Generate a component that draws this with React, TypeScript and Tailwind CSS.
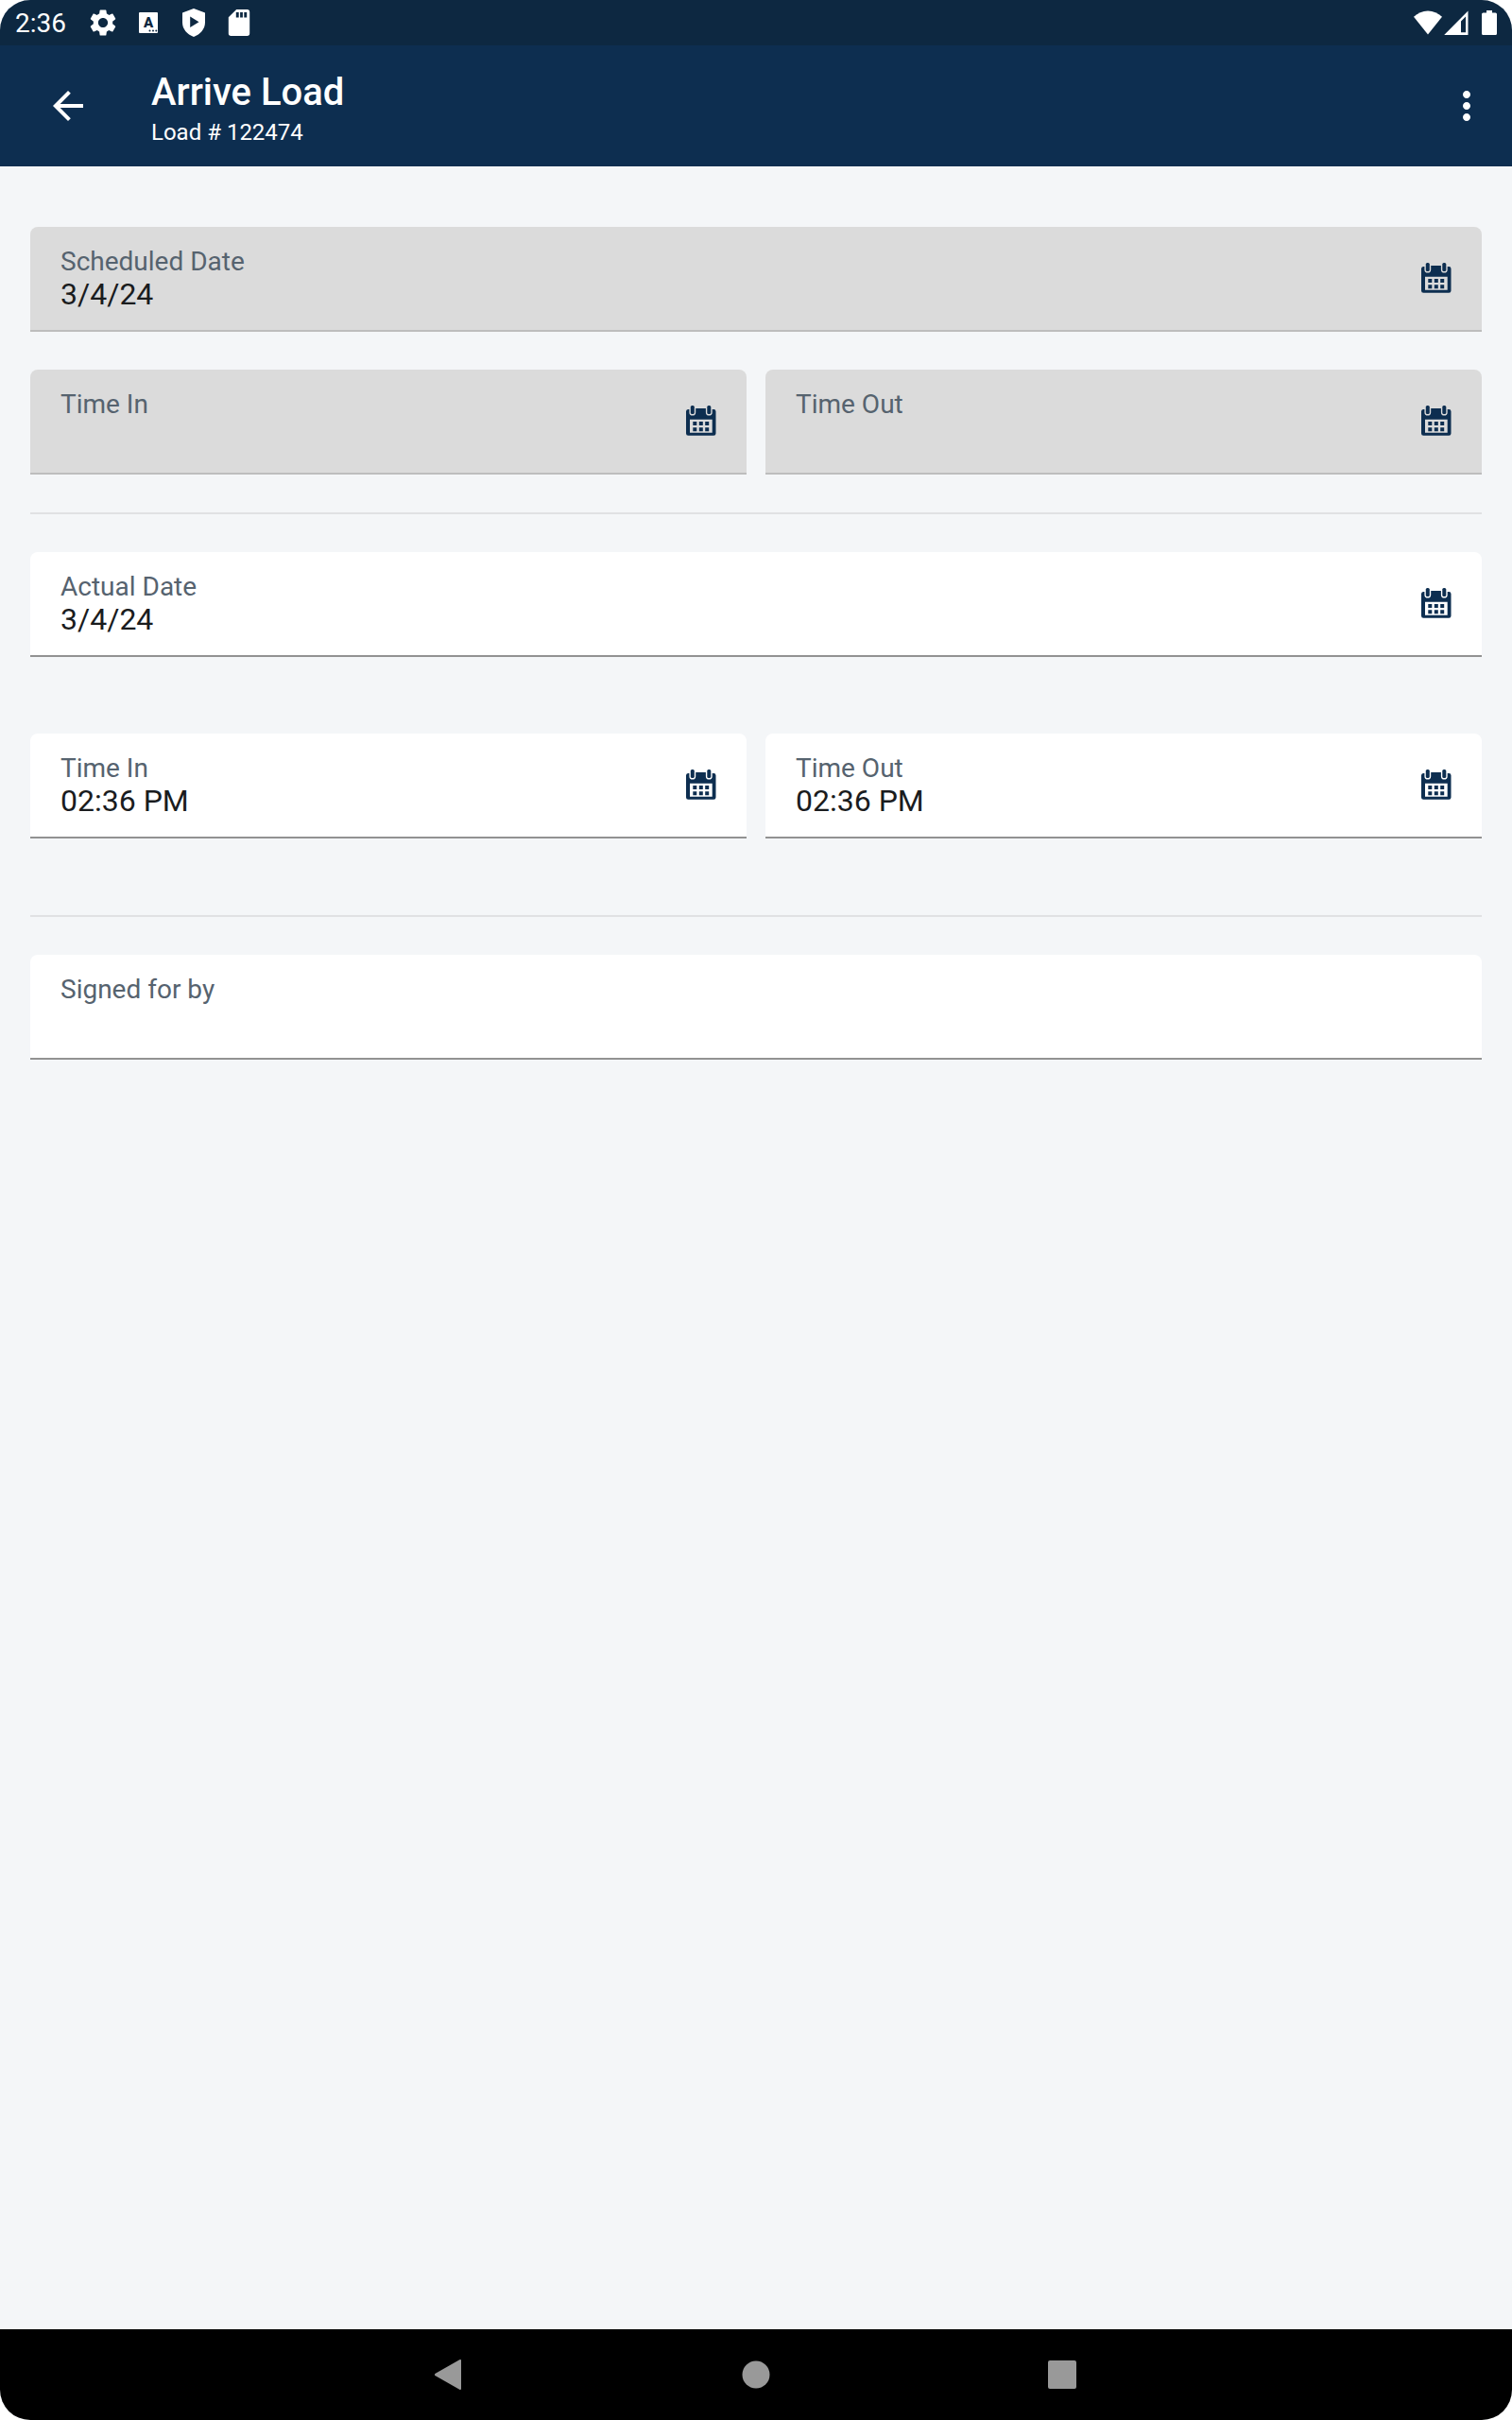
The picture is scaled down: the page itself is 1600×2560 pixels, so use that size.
import React, { useState } from "react";
import { MdArrowBack, MdMoreVert, MdSettings } from "react-icons/md";

const KeyboardIcon = () => (
  <svg viewBox="0 0 36 36" className="size-9" aria-hidden="true">
    <rect x="8" y="7" width="20" height="22" rx="1" fill="white" />
    <text
      x="18"
      y="23"
      textAnchor="middle"
      className="fill-[#0d2841] font-['Roboto'] text-[15px] font-black"
    >
      A
    </text>
    <circle cx="19.5" cy="26.5" r="1" fill="#0d2841" />
    <circle cx="23" cy="26.5" r="1" fill="#0d2841" />
    <circle cx="26.3" cy="26.5" r="1" fill="#0d2841" />
  </svg>
);

const ShieldIcon = () => (
  <svg viewBox="0 0 36 36" className="size-9" aria-hidden="true">
    <path
      fill="white"
      fillRule="evenodd"
      d="M18 3l12 4.600v10.200c0 6.800-4.800 12.600-12 15.200C10.800 30.400 6 24.600 6 17.800V7.600zM14.200 11.500v11.400l9.300-5.700z"
    />
  </svg>
);

const SdCardIcon = () => (
  <svg viewBox="0 0 36 36" className="size-9" aria-hidden="true">
    <path
      fill="white"
      fillRule="evenodd"
      d="M15.200 4H26.500a2.700 2.700 0 0 1 2.700 2.700V29.300a2.700 2.700 0 0 1-2.700 2.700H9.500a2.700 2.700 0 0 1-2.700-2.700V12.300zM14.800 7v5.600h2.900V7zM19.100 7v5.600h2.800V7zM23.300 7v5.600h2.900V7z"
    />
  </svg>
);

const WifiIcon = () => (
  <svg viewBox="0 0 30 26" className="h-[26px] w-[30px]" aria-hidden="true">
    <path fill="white" d="M15 25.500L0 6.800C4.300 3 9.400.5 15 .5S25.700 3 30 6.800z" />
  </svg>
);

const SignalIcon = () => (
  <svg viewBox="0 0 26 26" className="size-[26px]" aria-hidden="true">
    <path
      fill="white"
      fillRule="evenodd"
      d="M25.500.5v25.500H.2zM23 6.500L18 11.600V23.300h5z"
    />
  </svg>
);

const BatteryIcon = () => (
  <svg viewBox="0 0 16 26" className="h-[26px] w-4" aria-hidden="true">
    <path
      fill="white"
      d="M5 0h6v2.500h3.500A1.500 1.500 0 0 1 16 4v20.500a1.500 1.500 0 0 1-1.500 1.500h-13A1.500 1.500 0 0 1 0 24.500V4a1.500 1.500 0 0 1 1.500-1.500H5z"
    />
  </svg>
);

const CalendarIcon = () => (
  <svg viewBox="0 0 32 32" className="size-8" fill="currentColor" aria-hidden="true">
    <rect x="4.800" y="0" width="4" height="9" rx="1.600" />
    <rect x="22.300" y="0" width="4" height="9" rx="1.600" />
    <path
      fillRule="evenodd"
      d="M2 4h1.400v3.200a3.400 3.400 0 0 0 6.800 0V3h10.700v4.200a3.400 3.400 0 0 0 6.800 0V4h1.500A2.300 2.300 0 0 1 31.500 6.300V29.500a2.300 2.300 0 0 1-2.300 2.300H2.300A2.300 2.300 0 0 1 0 29.500V6.300A2.300 2.300 0 0 1 2 4zM4 14.700v14h23.700v-14z"
    />
    <path d="M7.300 17h4v4h-4zM13.800 17h4v4h-4zM20.200 17h4v4h-4zM7.300 23.200h4v4h-4zM13.800 23.200h4v4h-4zM20.200 23.200h4v4h-4z" />
  </svg>
);

interface FieldProps {
  id: string;
  label: string;
  initial?: string;
  disabled?: boolean;
  picker?: boolean;
}

const Field: React.FC<FieldProps> = ({
  id,
  label,
  initial = "",
  disabled = false,
  picker = true,
}) => {
  const [value, setValue] = useState(initial);

  return (
    <div
      className={`flex min-w-0 flex-1 items-center rounded-t-lg border-b-2 px-8 pt-[21px] pb-5 ${
        disabled ? "border-[#bdbdbd] bg-[#dbdbdb]" : "border-[#929292] bg-white"
      }`}
    >
      <div className="flex min-w-0 flex-1 flex-col">
        <label htmlFor={id} className="text-[28px] leading-8 text-[#56636f]">
          {label}
        </label>
        <input
          id={id}
          type="text"
          value={value}
          disabled={disabled}
          onChange={(e) => setValue(e.target.value)}
          className="h-9 w-full bg-transparent text-[32px] leading-9 text-[#1a1c1e] outline-none"
        />
      </div>
      {picker && (
        <button
          type="button"
          disabled={disabled}
          aria-label={`Pick ${label}`}
          className="pb-0.5 text-[#0d2e50]"
        >
          <CalendarIcon />
        </button>
      )}
    </div>
  );
};

const StatusBar = () => (
  <div className="flex h-12 items-center justify-between bg-[#0d2841] px-4 text-white">
    <div className="flex items-center">
      <span className="w-[75px] pt-0.5 text-[28px] leading-8">2:36</span>
      <div className="flex items-center gap-3">
        <MdSettings className="size-9 p-px" />
        <KeyboardIcon />
        <ShieldIcon />
        <SdCardIcon />
      </div>
    </div>
    <div className="flex items-center">
      <WifiIcon />
      <div className="ml-0.5 mr-3.5">
        <SignalIcon />
      </div>
      <BatteryIcon />
    </div>
  </div>
);

const Header = () => (
  <header className="flex h-32 items-center bg-[#0d2e50] pl-12 pr-6 text-white">
    <button type="button" aria-label="Back">
      <MdArrowBack className="size-12" />
    </button>
    <div className="ml-16 flex-1 pt-1">
      <h1 className="text-[40px] font-medium leading-[52px]">Arrive Load</h1>
      <p className="text-2xl leading-8">Load # 122474</p>
    </div>
    <button type="button" aria-label="More options">
      <MdMoreVert className="size-12" />
    </button>
  </header>
);

const NavBar = () => (
  <nav className="flex h-24 items-center justify-center gap-1 bg-black text-[#999999]">
    <button type="button" aria-label="Back" className="flex w-80 justify-center">
      <svg viewBox="0 0 32 32" className="size-8" fill="currentColor">
        <path d="M28 1v30a1 1 0 0 1-1.700.7L.8 17.300a1.600 1.600 0 0 1 0-2.600L26.300.3A1 1 0 0 1 28 1z" />
      </svg>
    </button>
    <button type="button" aria-label="Home" className="flex w-80 justify-center">
      <svg viewBox="0 0 32 32" className="size-8" fill="currentColor">
        <circle cx="16" cy="16" r="14.500" />
      </svg>
    </button>
    <button type="button" aria-label="Overview" className="flex w-80 justify-center">
      <svg viewBox="0 0 32 32" className="size-8" fill="currentColor">
        <rect x="1" y="1" width="30" height="30" rx="2" />
      </svg>
    </button>
  </nav>
);

const App: React.FC = () => {
  return (
    <div className="bg-white font-['Roboto',sans-serif]">
      <div className="flex min-h-screen flex-col overflow-hidden rounded-[32px] bg-[#f4f6f8]">
        <StatusBar />
        <Header />
        <main className="flex-1 px-8 pt-16">
          <form className="flex flex-col">
            {/* Scheduled */}
            <div className="flex flex-col gap-10">
              <Field id="scheduled-date" label="Scheduled Date" initial="3/4/24" disabled />
              <div className="flex gap-5">
                <Field id="scheduled-in" label="Time In" disabled />
                <Field id="scheduled-out" label="Time Out" disabled />
              </div>
            </div>
            <hr className="my-10 border-t-2 border-[#e0e1e3]" />
            {/* Actual */}
            <div className="flex flex-col gap-[81px] pb-[41px]">
              <Field id="actual-date" label="Actual Date" initial="3/4/24" />
              <div className="flex gap-5">
                <Field id="actual-in" label="Time In" initial="02:36 PM" />
                <Field id="actual-out" label="Time Out" initial="02:36 PM" />
              </div>
            </div>
            <hr className="my-10 border-t-2 border-[#e0e1e3]" />
            <Field id="signed-for-by" label="Signed for by" picker={false} />
          </form>
        </main>
        <NavBar />
      </div>
    </div>
  );
};

export default App;
